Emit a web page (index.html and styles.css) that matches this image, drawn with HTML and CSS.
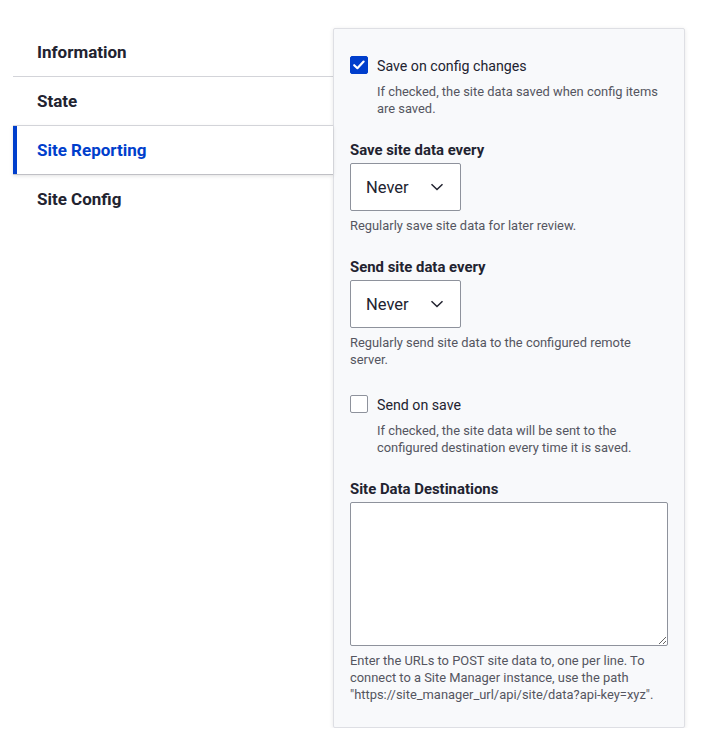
FILE: index.html
```html
<!DOCTYPE html>
<html lang="en">
<head>
<meta charset="utf-8">
<title>Site Reporting</title>
<link rel="stylesheet" href="styles.css">
</head>
<body>
<div class="vtabs">
  <ul class="menu">
    <li class="menu-item"><a class="menu-link">Information</a></li>
    <li class="menu-item"><a class="menu-link">State</a></li>
    <li class="menu-item is-active"><a class="menu-link">Site Reporting</a></li>
    <li class="menu-item"><a class="menu-link">Site Config</a></li>
  </ul>
  <div class="pane">
    <div class="check-item">
      <span class="checkbox is-checked"><svg viewBox="0 0 18 18" width="18" height="18"><path d="M4.2 9.2 L7.4 12.2 L13.6 5.6" fill="none" stroke="#fff" stroke-width="2.2" stroke-linecap="round" stroke-linejoin="round"/></svg></span>
      <span class="option-label">Save on config changes</span>
      <div class="desc option-desc">If checked, the site data saved when config items are saved.</div>
    </div>
    <div class="form-item">
      <div class="label">Save site data every</div>
      <div class="select"><span>Never</span><svg class="chev" viewBox="0 0 14 8" width="14" height="8"><path d="M1.5 1.2 L7 6.5 L12.5 1.2" fill="none" stroke="#222330" stroke-width="1.5"/></svg></div>
      <div class="desc">Regularly save site data for later review.</div>
    </div>
    <div class="form-item">
      <div class="label">Send site data every</div>
      <div class="select"><span>Never</span><svg class="chev" viewBox="0 0 14 8" width="14" height="8"><path d="M1.5 1.2 L7 6.5 L12.5 1.2" fill="none" stroke="#222330" stroke-width="1.5"/></svg></div>
      <div class="desc">Regularly send site data to the configured remote server.</div>
    </div>
    <div class="check-item">
      <span class="checkbox"></span>
      <span class="option-label">Send on save</span>
      <div class="desc option-desc">If checked, the site data will be sent to the configured destination every time it is saved.</div>
    </div>
    <div class="form-item">
      <div class="label">Site Data Destinations</div>
      <textarea class="textarea"></textarea>
      <div class="desc">Enter the URLs to POST site data to, one per line. To connect to a Site Manager instance, use the path "https://site_manager_url/api/site/data?api-key=xyz".</div>
    </div>
  </div>
</div>
</body>
</html>
```
FILE: styles.css
```css
html, body {
  margin: 0;
  background: #fff;
}
body {
  padding: 28px 0 0 13px;
  font-family: Roboto, "Noto Sans", sans-serif;
  color: #222330;
}
.vtabs {
  display: flex;
  align-items: flex-start;
}
.menu {
  list-style: none;
  margin: 0;
  padding: 0;
  width: 320px;
}
.menu-item {
  border-top: 1px solid #d3d4d9;
}
.menu-item:first-child {
  border-top: 0;
}
.menu-link {
  display: block;
  padding: 12px 24px;
  line-height: 24px;
  font-size: 17px;
  font-weight: 700;
  color: #222330;
}
.menu-item.is-active {
  background: #fff;
  box-shadow: inset 4px 0 0 #003ecc, 0 2px 4px rgba(0, 0, 0, 0.12);
  position: relative;
}
.menu-item.is-active .menu-link {
  color: #003ecc;
}
.pane {
  width: 352px;
  box-sizing: border-box;
  border: 1px solid #dedfe4;
  border-radius: 2px;
  background: #f8f9fb;
  box-shadow: 0 1px 4px rgba(0, 0, 0, 0.1);
  padding: 24px 16px 24px;
  display: flex;
  flex-direction: column;
  gap: 24px;
}
.check-item {
  display: grid;
  grid-template-columns: 18px 1fr;
  column-gap: 9px;
  align-items: start;
}
.checkbox {
  width: 18px;
  height: 18px;
  box-sizing: border-box;
  margin-top: 3px;
  border: 1px solid #8e929c;
  border-radius: 2px;
  background: #fff;
  display: block;
}
.checkbox svg {
  display: block;
  margin: -1px;
}
.checkbox.is-checked {
  background: #003ecc;
  border-color: #003ecc;
}
.option-label {
  font-size: 14.2px;
  line-height: 26px;
}
.option-desc {
  grid-column: 2;
  margin-top: 4px !important;
}
.form-item {
  display: flex;
  flex-direction: column;
  align-items: flex-start;
}
.label {
  font-size: 14.9px;
  font-weight: 700;
  line-height: 18px;
  margin-bottom: 4px;
}
.select {
  width: 111px;
  height: 48px;
  box-sizing: border-box;
  border: 1px solid #8e929c;
  border-radius: 2px;
  background: #fff;
  padding: 0 16px 0 15px;
  display: flex;
  align-items: center;
  justify-content: space-between;
  font-size: 16.5px;
}
.chev {
  display: block;
}
.desc {
  font-size: 12.9px;
  line-height: 17px;
  color: #545560;
  margin-top: 6px;
}
.textarea {
  display: block;
  width: 100%;
  height: 144px;
  box-sizing: border-box;
  margin: 0;
  border: 1px solid #8e929c;
  border-radius: 2px;
  background: #fff;
  resize: vertical;
  font-family: inherit;
}
```
